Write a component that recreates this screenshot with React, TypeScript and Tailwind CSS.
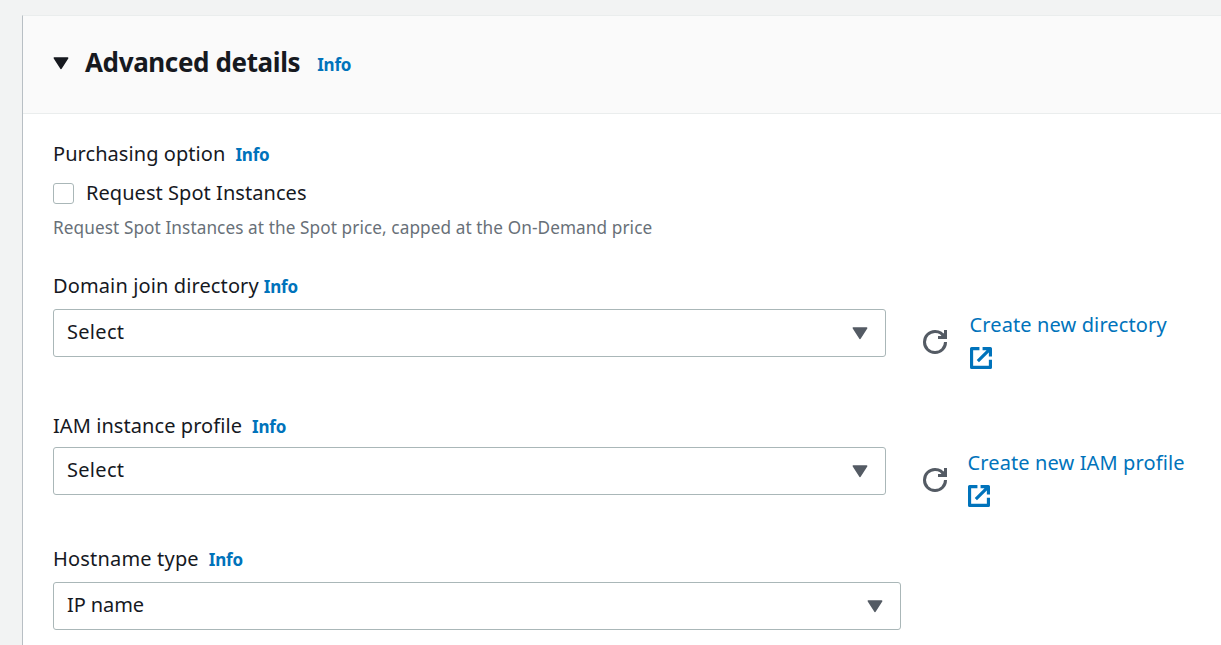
import type { ReactNode } from 'react';

function Caret({ className }: { className: string }) {
  return (
    <svg viewBox="0 0 16 13" className={`h-[13px] w-4 shrink-0 ${className}`} aria-hidden="true">
      <path d="M1.4 1h13.2L8 11.3z" fill="currentColor" stroke="currentColor" strokeWidth="1.6" strokeLinejoin="round" />
    </svg>
  );
}

function InfoLink({ className }: { className: string }) {
  return (
    <a href="#" className={`text-[17px] font-bold leading-[30px] tracking-[-0.2px] text-[#0073bb] ${className}`}>
      Info
    </a>
  );
}

function Label({ children, info, className }: { children: ReactNode; info: string; className: string }) {
  return (
    <div className={`flex h-[30px] items-baseline whitespace-nowrap text-[20px] leading-[30px] ${className}`}>
      <span>{children}</span>
      <InfoLink className={info} />
    </div>
  );
}

function SelectBox({ value, className }: { value: string; className: string }) {
  return (
    <button
      type="button"
      className={`flex h-12 shrink-0 items-center justify-between rounded-[3px] border border-[#aab7b8] bg-white pl-[13px] pr-[17px] text-[20px] leading-[30px] ${className}`}
    >
      <span className="-mt-[3px]">{value}</span>
      <Caret className="text-[#545b64]" />
    </button>
  );
}

function RefreshIcon() {
  return (
    <svg viewBox="0 0 16 16" className="ml-[37px] mt-[21px] size-6 shrink-0 text-[#545b64]" fill="none" stroke="currentColor" strokeWidth="2">
      <path d="M10 5h5V0" />
      <path d="M11.5 4.5h3v-3z" fill="currentColor" stroke="none" />
      <path d="M15 8a6.957 6.957 0 0 1-7 7 6.957 6.957 0 0 1-7-7 6.957 6.957 0 0 1 7-7 6.87 6.87 0 0 1 6.3 4" />
    </svg>
  );
}

function ExternalIcon() {
  return (
    <svg viewBox="1 1 14 14" className="mt-[7px] size-[22px]" fill="none" stroke="currentColor" strokeWidth="2" strokeLinejoin="round">
      <path d="M9 2h5v5M6 10l8-8" />
      <path d="M14 9.048V14H2V2h5" />
    </svg>
  );
}

function CreateLink({ children, className }: { children: ReactNode; className: string }) {
  return (
    <a href="#" className={`mt-px flex flex-col whitespace-nowrap text-[20px] leading-[30px] tracking-[0.12px] text-[#0073bb] ${className}`}>
      <span className="-ml-[0.5px]">{children}</span>
      <ExternalIcon />
    </a>
  );
}

export default function App() {
  return (
    <div className="h-[645px] w-full overflow-hidden bg-[#f2f3f3] pl-[22px] pt-[15px] font-['Noto_Sans',sans-serif] text-[#16191f]">
      <section className="h-[630px] border-l border-t border-l-[#b8bfc4] border-t-[#eaeded] bg-white">
        <header className="flex h-[98px] items-start border-b border-[#eaeded] bg-[#fafafa] pl-[30px] pt-[26px]">
          <Caret className="mt-[15px] text-[#16191f]" />
          <h2 className="ml-4 whitespace-nowrap text-[26px] font-bold leading-[40px] tracking-[-0.38px]">Advanced details</h2>
          <InfoLink className="ml-[17px] mt-[8px]" />
        </header>
        <div className="pl-[30px] pt-[25px]">
          <Label className="tracking-[0.06px]" info="ml-[10px]">Purchasing option</Label>
          <label className="mt-[9px] flex h-[30px] items-center whitespace-nowrap text-[20px] leading-[30px] tracking-[0.05px]">
            <input type="checkbox" className="mt-px size-[21px] appearance-none rounded-[3px] border border-[#aab7b8] bg-white" />
            <span className="ml-3">Request Spot Instances</span>
          </label>
          <p className="mt-[7px] whitespace-nowrap text-[17.2px] leading-[26px] tracking-[0.09px] text-[#687078]">
            Request Spot Instances at the Spot price, capped at the On-Demand price
          </p>

          <Label className="mt-[30px] tracking-[0.12px]" info="ml-[5px]">Domain join directory</Label>
          <div className="mt-[8px] flex h-[71px] items-start">
            <SelectBox value="Select" className="w-[833px] tracking-[0.3px]" />
            <RefreshIcon />
            <CreateLink className="ml-[23px]">Create new directory</CreateLink>
          </div>

          <Label className="mt-[31px] tracking-[0.07px]" info="ml-[10px]">IAM instance profile</Label>
          <div className="mt-[6px] flex h-[71px] items-start">
            <SelectBox value="Select" className="w-[833px] tracking-[0.3px]" />
            <RefreshIcon />
            <CreateLink className="ml-[21px]">Create new IAM profile</CreateLink>
          </div>

          <Label className="mt-[26px] tracking-[0.18px]" info="ml-[10px]">Hostname type</Label>
          <div className="mt-[8px] flex">
            <SelectBox value="IP name" className="w-[848px] tracking-[-0.1px]" />
          </div>
        </div>
      </section>
    </div>
  );
}
